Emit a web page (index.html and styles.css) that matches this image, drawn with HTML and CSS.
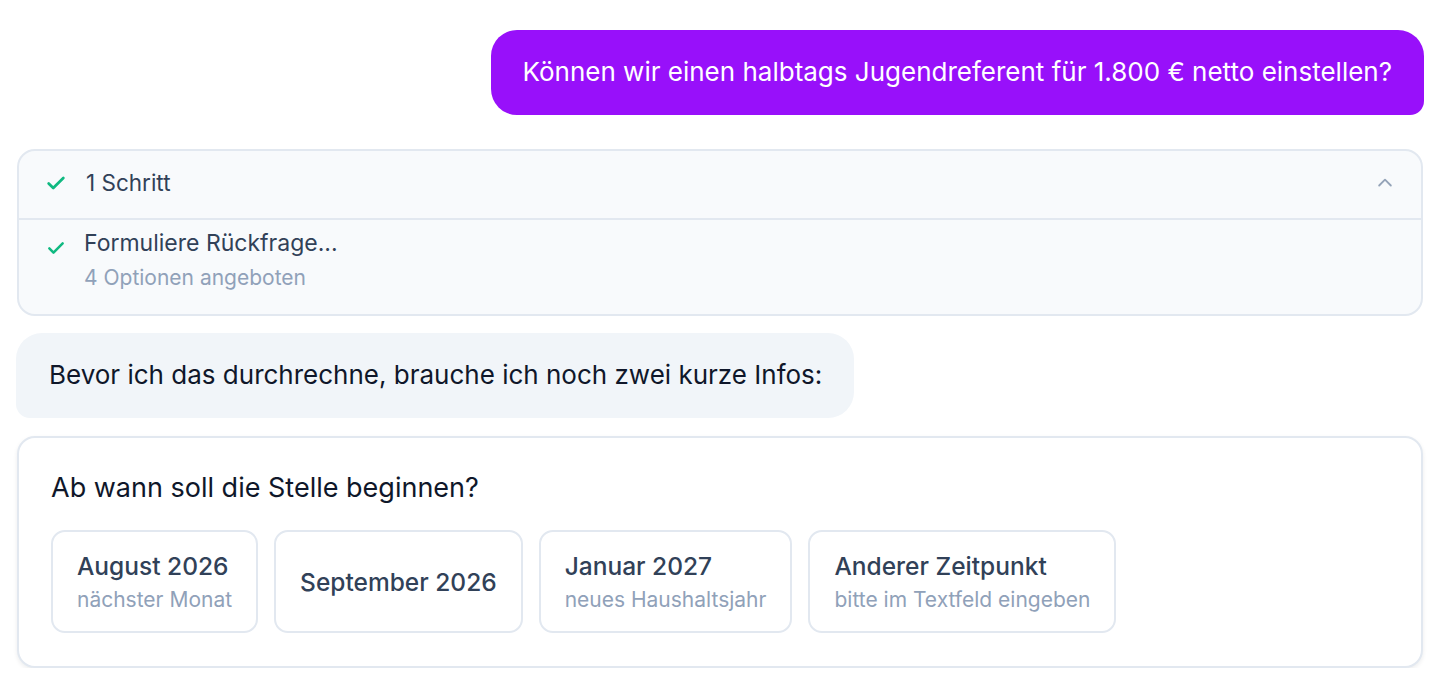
FILE: index.html
```html
<!DOCTYPE html>
<html lang="de">
<head>
<meta charset="utf-8">
<link rel="stylesheet" href="styles.css">
</head>
<body>
<div class="chat">
  <div class="row-user">
    <div class="bubble-user">Können wir einen halbtags Jugendreferent für 1.800 € netto einstellen?</div>
  </div>

  <div class="steps">
    <div class="steps-head">
      <svg class="check" width="22" height="22" viewBox="0 0 24 24" fill="none" stroke="#10b981" stroke-width="3" stroke-linecap="round" stroke-linejoin="round"><path d="M4 12.5l5 5L20 6.5"/></svg>
      <span class="steps-title">1 Schritt</span>
      <svg class="chev" width="20" height="20" viewBox="0 0 24 24" fill="none" stroke="#94a3b8" stroke-width="2.2" stroke-linecap="round" stroke-linejoin="round"><path d="M5 15l7-7 7 7"/></svg>
    </div>
    <div class="steps-body">
      <svg class="check small" width="20" height="20" viewBox="0 0 24 24" fill="none" stroke="#10b981" stroke-width="3" stroke-linecap="round" stroke-linejoin="round"><path d="M4 12.5l5 5L20 6.5"/></svg>
      <div class="step-text">
        <div class="step-name">Formuliere Rückfrage...</div>
        <div class="step-sub">4 Optionen angeboten</div>
      </div>
    </div>
  </div>

  <div class="row-bot">
    <div class="bubble-bot">Bevor ich das durchrechne, brauche ich noch zwei kurze Infos:</div>
  </div>

  <div class="question">
    <div class="q-title">Ab wann soll die Stelle beginnen?</div>
    <div class="options">
      <div class="opt"><div class="opt-title">August 2026</div><div class="opt-sub">nächster Monat</div></div>
      <div class="opt"><div class="opt-title">September 2026</div></div>
      <div class="opt"><div class="opt-title">Januar 2027</div><div class="opt-sub">neues Haushaltsjahr</div></div>
      <div class="opt"><div class="opt-title">Anderer Zeitpunkt</div><div class="opt-sub">bitte im Textfeld eingeben</div></div>
    </div>
  </div>
</div>
</body>
</html>
```

FILE: styles.css
```css
* { box-sizing: border-box; }
html, body { margin: 0; padding: 0; background: #ffffff; }
body {
  font-family: Inter, "Noto Sans", sans-serif;
  color: #0f172a;
}
.chat {
  padding: 30px 28px 0 16px;
  display: flex;
  flex-direction: column;
}
.row-user { display: flex; justify-content: flex-end; }
.bubble-user {
  background: #9810fa;
  color: #ffffff;
  font-size: 26px;
  line-height: 36px;
  padding: 24px 32px 25px;
  border-radius: 26px 26px 14px 26px;
}
.steps {
  margin-top: 34px;
  margin-left: 1px;
  margin-right: 1px;
  background: #f8fafc;
  border: 2px solid #e2e8f0;
  border-radius: 18px;
}
.steps-head {
  height: 69px;
  display: flex;
  align-items: center;
  padding: 0 26px 4px 26px;
  border-bottom: 2px solid #e2e8f0;
}
.steps-head .check { margin-right: 19px; }
.steps-title {
  font-size: 22.5px;
  color: #314158;
  flex: 1;
}
.steps-body {
  display: flex;
  align-items: flex-start;
  padding: 8px 26px 22px 27px;
}
.steps-body .check { margin-right: 18px; margin-top: 10px; }
.step-name {
  font-size: 23px;
  line-height: 30px;
  color: #314158;
}
.step-sub {
  margin-top: 6px;
  font-size: 21px;
  line-height: 28px;
  color: #90a1b9;
}
.row-bot { margin-top: 17px; display: flex; }
.bubble-bot {
  background: #f1f5f9;
  font-size: 26px;
  line-height: 36px;
  color: #0f172a;
  padding: 24px 32px 25px 33px;
  border-radius: 26px 26px 26px 14px;
}
.question {
  margin-top: 18px;
  margin-left: 1px;
  margin-right: 1px;
  border: 2px solid #e2e8f0;
  border-radius: 18px;
  background: #ffffff;
  box-shadow: 0 2px 4px rgba(15, 23, 42, 0.08);
  padding: 32px 32px 33px 32px;
}
.q-title {
  font-size: 27px;
  line-height: 36px;
  font-weight: 400;
  color: #0f172a;
}
.options {
  margin-top: 24px;
  display: flex;
  gap: 16px;
}
.opt {
  border: 2px solid #e2e8f0;
  border-radius: 14px;
  padding: 17px 24px;
  height: 103px;
  display: flex;
  flex-direction: column;
  justify-content: center;
}
.opt-title {
  font-size: 24.5px;
  line-height: 32px;
  font-weight: 500;
  color: #314158;
}
.opt-sub {
  margin-top: 4px;
  font-size: 21px;
  line-height: 28px;
  color: #90a1b9;
}
```
